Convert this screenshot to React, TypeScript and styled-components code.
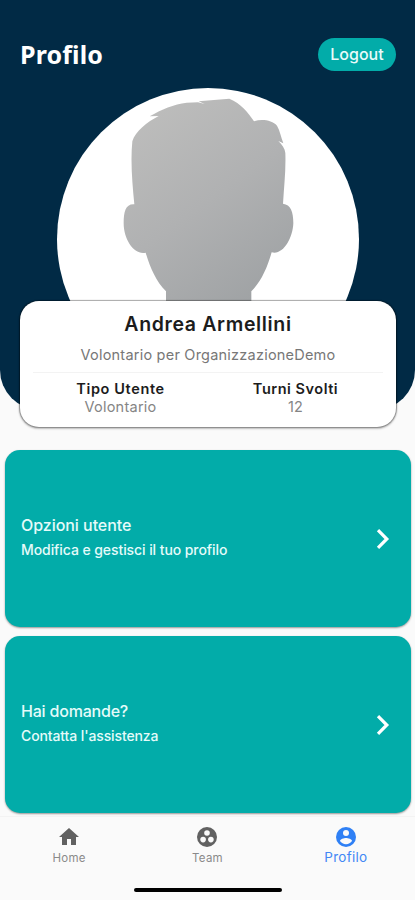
import React from "react";
import styled, { createGlobalStyle } from "styled-components";
import { MdHome } from "react-icons/md";

const GlobalStyle = createGlobalStyle`
  * { box-sizing: border-box; }
  body { margin: 0; background: #fafafa; font-family: Inter, "Liberation Sans", sans-serif; }
`;

const Screen = styled.main`
  width: 415px;
  height: 900px;
  display: flex;
  flex-direction: column;
  overflow: hidden;
  background: #fafafa;
`;

const Hero = styled.section`
  flex: none;
  height: 410px;
  display: flex;
  flex-direction: column;
  background: #012a45;
  border-radius: 0 0 40px 40px;
`;

const TopBar = styled.header`
  flex: none;
  height: 88px;
  padding: 38px 19px 0 20px;
  display: flex;
  justify-content: space-between;
  align-items: flex-start;
`;

const Title = styled.h1`
  margin: -1px 0 0;
  color: #fff;
  font: 700 25px/34px "Noto Sans", sans-serif;
  letter-spacing: 0.15px;
`;

const Logout = styled.button`
  width: 78px;
  height: 33px;
  padding: 0;
  border: 0;
  border-radius: 17px;
  background: #02aca9;
  color: #e9fbfa;
  font: 500 16px/33px Inter, sans-serif;
  letter-spacing: 0;
`;

const Avatar = styled.svg`
  flex: none;
  display: block;
  width: 302px;
  height: 214px;
  margin: 0 0 -1px 57px;
`;

const Card = styled.article`
  position: relative;
  flex: none;
  height: 126px;
  margin: 0 19px 0 20px;
  padding: 9px 13px 0;
  border-radius: 19px;
  background: #fff;
  box-shadow: 0 0 1px 1px rgba(0, 0, 0, 0.3), 0 1px 2px 1px rgba(0, 0, 0, 0.22);
  text-align: center;
`;

const Name = styled.h2`
  margin: 0;
  color: #1c1c1c;
  font-size: 19.5px;
  font-weight: 600;
  line-height: 28px;
  letter-spacing: 0.65px;
`;

const Role = styled.p`
  margin: 5px 0 0;
  color: #777;
  font-size: 14.5px;
  font-weight: 400;
  line-height: 24px;
  letter-spacing: 0.22px;
`;

const Stats = styled.div`
  display: grid;
  grid-template-columns: 1fr 1fr;
  margin-top: 5px;
  padding-top: 7px;
  border-top: 1px solid #f3f3f3;
`;

const StatLabel = styled.div<{ $spacing: number }>`
  color: #1c1c1c;
  font-size: 14.5px;
  font-weight: 600;
  line-height: 18px;
  letter-spacing: ${(p) => p.$spacing}px;
`;

const StatValue = styled.div`
  color: #858585;
  font-size: 14.5px;
  line-height: 18px;
  letter-spacing: 0.25px;
`;

const Menu = styled.section`
  flex: none;
  display: flex;
  flex-direction: column;
  gap: 9px;
  padding: 40px 4px 0 5px;
`;

const MenuItem = styled.div`
  height: 177px;
  padding: 0 16px;
  display: flex;
  align-items: center;
  justify-content: space-between;
  border-radius: 15px;
  background: #02aca9;
  color: #e5fbfa;
  box-shadow: 0 1px 2px rgba(0, 0, 0, 0.4);
`;

const MenuCopy = styled.div`
  padding-bottom: 3px;
`;

const MenuTitle = styled.div<{ $spacing: number }>`
  font-size: 16px;
  font-weight: 500;
  line-height: 25px;
  letter-spacing: ${(p) => p.$spacing}px;
`;

const MenuText = styled.div<{ $spacing: number }>`
  font-size: 14px;
  font-weight: 500;
  line-height: 24px;
  letter-spacing: ${(p) => p.$spacing}px;
`;

const Chevron = styled.svg`
  width: 22px;
  height: 24px;
`;

const TabBar = styled.nav`
  flex: none;
  height: 67px;
  margin-top: 3px;
  padding-top: 8px;
  display: grid;
  grid-template-columns: repeat(3, 1fr);
  border-top: 1px solid #f3f3f3;
  background: #fafafa;
`;

const Tab = styled.div<{ $active?: boolean }>`
  display: flex;
  flex-direction: column;
  align-items: center;
  color: ${(p) => (p.$active ? "#2f80f5" : "#616161")};
`;

const TabLabel = styled.span<{ $active?: boolean }>`
  color: ${(p) => (p.$active ? "#4288f5" : "#8a8a8a")};
  font-size: ${(p) => (p.$active ? 13.5 : 11.5)}px;
  line-height: 18px;
  letter-spacing: 0.25px;
  margin-top: ${(p) => (p.$active ? -1 : 0)}px;
`;

const HomeIndicator = styled.div`
  flex: none;
  width: 148px;
  height: 4px;
  margin: 5px 0 0 134px;
  border-radius: 2px;
  background: #000;
`;

const HomeIcon = () => <MdHome size={24} />;

const TeamIcon = () => (
  <svg width="24" height="24" viewBox="0 0 24 24">
    <circle cx="12" cy="12" r="10" fill="currentColor" />
    <circle cx="12" cy="8" r="2.8" fill="#fafafa" />
    <circle cx="8.1" cy="14.6" r="2.8" fill="#fafafa" />
    <circle cx="15.9" cy="14.6" r="2.8" fill="#fafafa" />
  </svg>
);

const ProfileIcon = () => (
  <svg width="24" height="24" viewBox="0 0 24 24">
    <circle cx="12" cy="12" r="10" fill="currentColor" />
    <circle cx="12" cy="8" r="3" fill="#fafafa" />
    <path
      fill="#fafafa"
      d="M12 19.2c-2.5 0-4.71-1.28-6-3.22.03-1.99 4-3.08 6-3.08s5.97 1.09 6 3.08c-1.29 1.94-3.5 3.22-6 3.22z"
    />
  </svg>
);

const items = [
  { title: "Opzioni utente", text: "Modifica e gestisci il tuo profilo", titleSpacing: -0.05, textSpacing: -0.08 },
  { title: "Hai domande?", text: "Contatta l'assistenza", titleSpacing: -0.2, textSpacing: -0.12 },
];

const tabs = [
  { label: "Home", Icon: HomeIcon, active: false },
  { label: "Team", Icon: TeamIcon, active: false },
  { label: "Profilo", Icon: ProfileIcon, active: true },
];

export default function App() {
  return (
    <Screen>
      <GlobalStyle />
      <Hero>
        <TopBar>
          <Title>Profilo</Title>
          <Logout>Logout</Logout>
        </TopBar>
        <Avatar viewBox="51 24 906 642">
          <defs>
            <linearGradient id="skin" gradientUnits="userSpaceOnUse" x1="300" y1="100" x2="690" y2="640">
              <stop offset="0" stopColor="#bdbdbc" />
              <stop offset="0.5" stopColor="#b0b1b2" />
              <stop offset="1" stopColor="#9fa2a4" />
            </linearGradient>
          </defs>
          <circle cx="504" cy="477" r="453" fill="#fff" />
          <path
            fill="url(#skin)"
            d="M378 670V634C348 604 330 562 317 518C284 526 251 481 251 430C251 395 257 371 283 373C277 310 271 245 277 184C286 154 321 126 356 108L329 109C364 88 402 73 440 68L474 67L494 72L476 64L568 56C603 71 624 96 642 124C666 116 697 121 711 137C720 153 723 171 730 190L715 183C726 194 735 206 736 219C738 270 732 320 729 371C752 374 760 394 760 430C758 476 729 526 695 517C682 562 664 604 634 634V670Z"
          />
        </Avatar>
        <Card>
          <Name>Andrea Armellini</Name>
          <Role>Volontario per OrganizzazioneDemo</Role>
          <Stats>
            <div>
              <StatLabel $spacing={0.62}>Tipo Utente</StatLabel>
              <StatValue>Volontario</StatValue>
            </div>
            <div>
              <StatLabel $spacing={0.52}>Turni Svolti</StatLabel>
              <StatValue>12</StatValue>
            </div>
          </Stats>
        </Card>
      </Hero>
      <Menu>
        {items.map((item) => (
          <MenuItem key={item.title}>
            <MenuCopy>
              <MenuTitle $spacing={item.titleSpacing}>{item.title}</MenuTitle>
              <MenuText $spacing={item.textSpacing}>{item.text}</MenuText>
            </MenuCopy>
            <Chevron viewBox="0 0 22 24" fill="none" stroke="#fff" strokeWidth="3.2">
              <path d="M5 3.2L13.8 12L5 20.8" />
            </Chevron>
          </MenuItem>
        ))}
      </Menu>
      <TabBar>
        {tabs.map(({ label, Icon, active }) => (
          <Tab key={label} $active={active}>
            <Icon />
            <TabLabel $active={active}>{label}</TabLabel>
          </Tab>
        ))}
      </TabBar>
      <HomeIndicator />
    </Screen>
  );
}
